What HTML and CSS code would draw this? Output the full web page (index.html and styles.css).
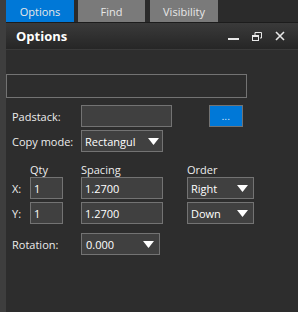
FILE: index.html
```html
<!DOCTYPE html>
<html>
<head>
<meta charset="utf-8">
<link rel="stylesheet" href="styles.css">
</head>
<body>
<div class="strip"></div>
<div class="main">
  <div class="tabs">
    <div class="tab active">Options</div>
    <div class="tab t2">Find</div>
    <div class="tab t3">Visibility</div>
  </div>
  <div class="header">
    <div class="title">Options</div>
    <div class="hicons">
      <svg class="ic-min" width="11" height="3" viewBox="0 0 11 3"><rect x="0" y="0" width="11" height="2" fill="#e8e8e8"/></svg>
      <svg class="ic-rest" width="10" height="9" viewBox="0 0 10 9"><path d="M3 0.5H9.5V6H8M3 0.5V3" fill="none" stroke="#e8e8e8" stroke-width="1"/><rect x="0.5" y="3.5" width="6" height="5" fill="none" stroke="#e8e8e8" stroke-width="1"/><rect x="0" y="3" width="7" height="2" fill="#e8e8e8"/></svg>
      <svg class="ic-close" width="10" height="10" viewBox="0 0 10 10"><path d="M1 1L9 9M9 1L1 9" stroke="#e8e8e8" stroke-width="1.6"/></svg>
    </div>
  </div>
  <div class="content">
    <div class="wide"></div>
    <div class="row r-pad">
      <span class="lbl">Padstack:</span>
      <div class="box pad"></div>
      <div class="btn">...</div>
    </div>
    <div class="row r-copy">
      <span class="lbl">Copy mode:</span>
      <div class="box sel copy"><span class="val">Rectangul</span><svg class="tri" width="11" height="7" viewBox="0 0 11 7"><polygon points="0,0 11,0 5.5,7" fill="#fff"/></svg></div>
    </div>
    <div class="row r-head">
      <span class="axis"></span>
      <span class="h-qty">Qty</span>
      <span class="h-sp">Spacing</span>
      <span class="h-ord">Order</span>
    </div>
    <div class="row r-x">
      <span class="axis">X:</span>
      <div class="box qty"><span class="val">1</span></div>
      <div class="box sp"><span class="val">1.2700</span></div>
      <div class="box sel ord"><span class="val">Right</span><svg class="tri" width="11" height="7" viewBox="0 0 11 7"><polygon points="0,0 11,0 5.5,7" fill="#fff"/></svg></div>
    </div>
    <div class="row r-y">
      <span class="axis">Y:</span>
      <div class="box qty"><span class="val">1</span></div>
      <div class="box sp"><span class="val">1.2700</span></div>
      <div class="box sel ord"><span class="val">Down</span><svg class="tri" width="11" height="7" viewBox="0 0 11 7"><polygon points="0,0 11,0 5.5,7" fill="#fff"/></svg></div>
    </div>
    <div class="row r-rot">
      <span class="lbl">Rotation:</span>
      <div class="box sel rot"><span class="val v-rot">0.000</span><svg class="tri" width="11" height="7" viewBox="0 0 11 7"><polygon points="0,0 11,0 5.5,7" fill="#fff"/></svg></div>
    </div>
  </div>
</div>
</body>
</html>
```
FILE: styles.css
```css
* { box-sizing: border-box; }
html, body { margin: 0; padding: 0; }
body {
  width: 298px;
  height: 312px;
  overflow: hidden;
  display: flex;
  background: #2d2d2d;
  font-family: "Open Sans", "Noto Sans", sans-serif;
  font-size: 11px;
  color: #ececec;
}
.strip { width: 6px; background: #3e3e3e; flex: none; }
.main { flex: 1; display: flex; flex-direction: column; }
.tabs {
  height: 23px;
  display: flex;
  background: #2b2b2b;
  border-bottom: 1px solid #1c1c1c;
}
.tab {
  height: 22px;
  display: flex;
  align-items: center;
  justify-content: center;
  background: #7a7a7a;
  color: #e8e8e8;
  font-size: 11px;
}
.tab.active { width: 68px; background: #0078d7; }
.t2 { width: 67px; margin-left: 4px; }
.t3 { width: 68px; margin-left: 5px; }
.header {
  height: 27px;
  display: flex;
  align-items: center;
  padding-left: 10px;
  background: linear-gradient(#3a3a3a, #262626);
  border-bottom: 1px solid #3a3a3a;
}
.title { font-weight: 700; font-size: 13px; color: #fff; flex: 1; }
.hicons { display: flex; align-items: center; height: 100%; }
.ic-min { margin-top: 7px; margin-right: 13px; }
.ic-rest { margin-right: 13px; }
.ic-close { margin-right: 13px; }
.content { padding-top: 24px; display: flex; flex-direction: column; }
.wide {
  width: 241px;
  height: 24px;
  border: 1px solid #737373;
  background: #2d2d2d;
}
.row { display: flex; align-items: center; height: 22px; }
.r-pad { margin-top: 7px; }
.r-copy { margin-top: 3px; }
.r-head { margin-top: 9px; height: 16px; }
.r-x { margin-top: 0; }
.r-y { margin-top: 3px; }
.r-rot { margin-top: 9px; }
.lbl { width: 75px; padding-left: 6px; flex: none; }
.box {
  height: 22px;
  border: 1px solid #737373;
  background: #404040;
  display: flex;
  align-items: center;
  padding-left: 3px;
  color: #fff;
  overflow: hidden;
  flex: none;
}
.pad { width: 91px; }
.btn {
  width: 34px;
  height: 22px;
  margin-left: 37px;
  background: #0078d7;
  border: 1px solid #737373;
  color: #fff;
  font-size: 9px;
  display: flex;
  justify-content: center;
  align-items: flex-end;
  padding-bottom: 3px;
  letter-spacing: 0.5px;
}
.sel { justify-content: space-between; padding-right: 5px; }
.copy { width: 82px; }
.copy .tri { margin-right: -2px; }
.axis { width: 24px; padding-left: 6px; flex: none; }
.h-qty { width: 51px; flex: none; }
.h-sp { width: 106px; flex: none; }
.qty { width: 33px; }
.sp { width: 82px; margin-left: 18px; }
.ord { width: 67px; margin-left: 24px; }
.rot { width: 79px; }
.v-rot { padding-left: 1px; }
```
